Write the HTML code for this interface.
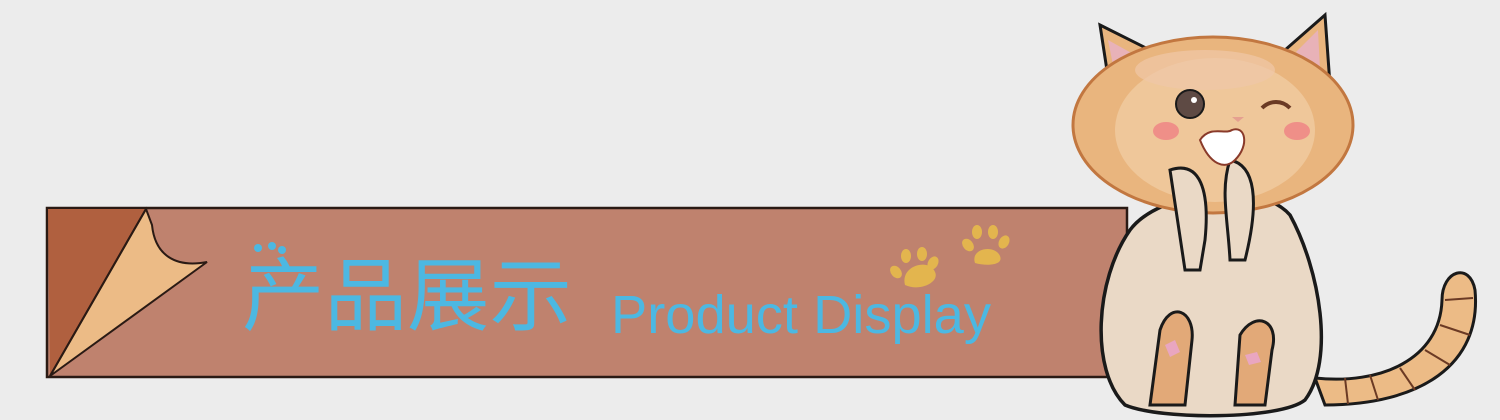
<!DOCTYPE html>
<html><head><meta charset="utf-8"><style>
html,body{margin:0;padding:0;background:#ececec;}
svg{display:block}
</style></head><body>
<svg width="1500" height="420" viewBox="0 0 1500 420" xmlns="http://www.w3.org/2000/svg">
<rect width="1500" height="420" fill="#ececec"/>
<!-- banner -->
<rect x="47" y="208" width="1080" height="169" fill="#bf826e" stroke="#2a1a14" stroke-width="2.5"/>
<polygon points="48,209 146,209 50,376" fill="#b0603f"/>
<path d="M146,209 L50,376 L207,262 C175,268 155,255 152,225 Z" fill="#ecbb86" stroke="#2a1a14" stroke-width="2"/>
<line x1="146" y1="209" x2="50" y2="376" stroke="#2a1a14" stroke-width="2"/>
<!-- text -->
<text x="242" y="324" font-family="Noto Sans CJK SC, WenQuanYi Zen Hei, sans-serif" font-size="80" font-weight="normal" fill="#4cb8e2" textLength="330" lengthAdjust="spacingAndGlyphs">产品展示</text>
<circle cx="258" cy="248" r="4" fill="#4cb8e2"/><circle cx="272" cy="246" r="4" fill="#4cb8e2"/><circle cx="282" cy="250" r="4" fill="#4cb8e2"/>
<text x="611" y="333" font-family="Liberation Sans, sans-serif" font-size="54" fill="#4cb8e2" textLength="380" lengthAdjust="spacingAndGlyphs">Product Display</text>
<!-- paws -->
<g fill="#e3b54e">
<path d="M905,285 C900,265 930,258 935,272 C940,282 920,292 905,285Z"/>
<ellipse cx="896" cy="272" rx="5" ry="7" transform="rotate(-40 896 272)"/>
<ellipse cx="906" cy="256" rx="5" ry="7"/>
<ellipse cx="922" cy="254" rx="5" ry="7"/>
<ellipse cx="933" cy="263" rx="5" ry="7" transform="rotate(30 933 263)"/>
<path d="M975,263 C970,248 995,244 1000,256 C1004,266 985,266 975,263Z"/>
<ellipse cx="968" cy="245" rx="5" ry="7" transform="rotate(-40 968 245)"/>
<ellipse cx="977" cy="232" rx="5" ry="7"/>
<ellipse cx="993" cy="232" rx="5" ry="7"/>
<ellipse cx="1004" cy="242" rx="5" ry="7" transform="rotate(30 1004 242)"/>
</g>
<!-- cat tail -->
<path d="M1315,378 C1380,385 1440,360 1442,300 C1442,270 1470,262 1475,290 C1482,365 1420,405 1325,405 Z" fill="#ecbb86" stroke="#1a1a1a" stroke-width="3"/>
<g stroke="#6b3a24" stroke-width="2"><line x1="1445" y1="300" x2="1473" y2="298"/><line x1="1440" y1="325" x2="1470" y2="335"/><line x1="1425" y1="350" x2="1450" y2="365"/><line x1="1400" y1="368" x2="1415" y2="390"/><line x1="1370" y1="375" x2="1378" y2="400"/><line x1="1345" y1="378" x2="1348" y2="404"/></g>
<!-- body -->
<path d="M1130,230 C1095,280 1090,370 1125,405 C1160,420 1280,420 1305,400 C1335,360 1320,270 1290,215 C1260,180 1160,190 1130,230Z" fill="#ead9c6" stroke="#1a1a1a" stroke-width="3.5"/>
<!-- legs -->
<path d="M1160,330 C1170,300 1195,310 1192,340 L1185,405 L1150,405 Z" fill="#e2a978" stroke="#1a1a1a" stroke-width="3"/>
<path d="M1240,335 C1255,310 1280,320 1272,350 L1265,405 L1235,405 Z" fill="#e2a978" stroke="#1a1a1a" stroke-width="3"/>
<path d="M1165,345 l10,-5 l5,12 l-10,5 z" fill="#e9a6c0"/>
<path d="M1245,355 l12,-3 l4,10 l-12,3 z" fill="#e9a6c0"/>
<!-- ears -->
<path d="M1100,25 L1150,50 L1110,90 Z" fill="#e9b57e" stroke="#1a1a1a" stroke-width="3"/>
<path d="M1325,15 L1330,85 L1285,50 Z" fill="#e9b57e" stroke="#1a1a1a" stroke-width="3"/>
<path d="M1108,40 L1135,55 L1115,75 Z" fill="#e8b2b8"/>
<path d="M1318,30 L1320,70 L1296,52 Z" fill="#e8b2b8"/>
<!-- head -->
<ellipse cx="1213" cy="125" rx="140" ry="88" fill="#e9b57e" stroke="#c27740" stroke-width="3"/>
<ellipse cx="1215" cy="130" rx="100" ry="72" fill="#efc79a"/>
<ellipse cx="1205" cy="70" rx="70" ry="20" fill="#f0c7a8" opacity="0.7"/>
<!-- arms -->
<path d="M1170,170 C1200,160 1210,190 1205,240 L1200,270 L1185,270 Z" fill="#ead9c6" stroke="#1a1a1a" stroke-width="3"/>
<path d="M1230,160 C1255,165 1260,200 1245,260 L1230,260 C1228,220 1220,190 1230,160Z" fill="#ead9c6" stroke="#1a1a1a" stroke-width="3"/>
<!-- face -->
<circle cx="1190" cy="104" r="14" fill="#5e4a44" stroke="#1a1a1a" stroke-width="2"/>
<circle cx="1194" cy="100" r="3" fill="#fff"/>
<path d="M1262,108 C1270,100 1282,100 1290,108" fill="none" stroke="#6b3a24" stroke-width="4"/>
<ellipse cx="1166" cy="131" rx="13" ry="9" fill="#ef8f88"/>
<ellipse cx="1297" cy="131" rx="13" ry="9" fill="#ef8f88"/>
<path d="M1200,140 C1210,125 1225,135 1232,130 C1245,125 1250,145 1235,160 C1225,170 1210,165 1200,140Z" fill="#fff" stroke="#8a3a2a" stroke-width="2"/>
<path d="M1232,117 h12 l-6,5z" fill="#e5a090"/>
</svg>
</body></html>
